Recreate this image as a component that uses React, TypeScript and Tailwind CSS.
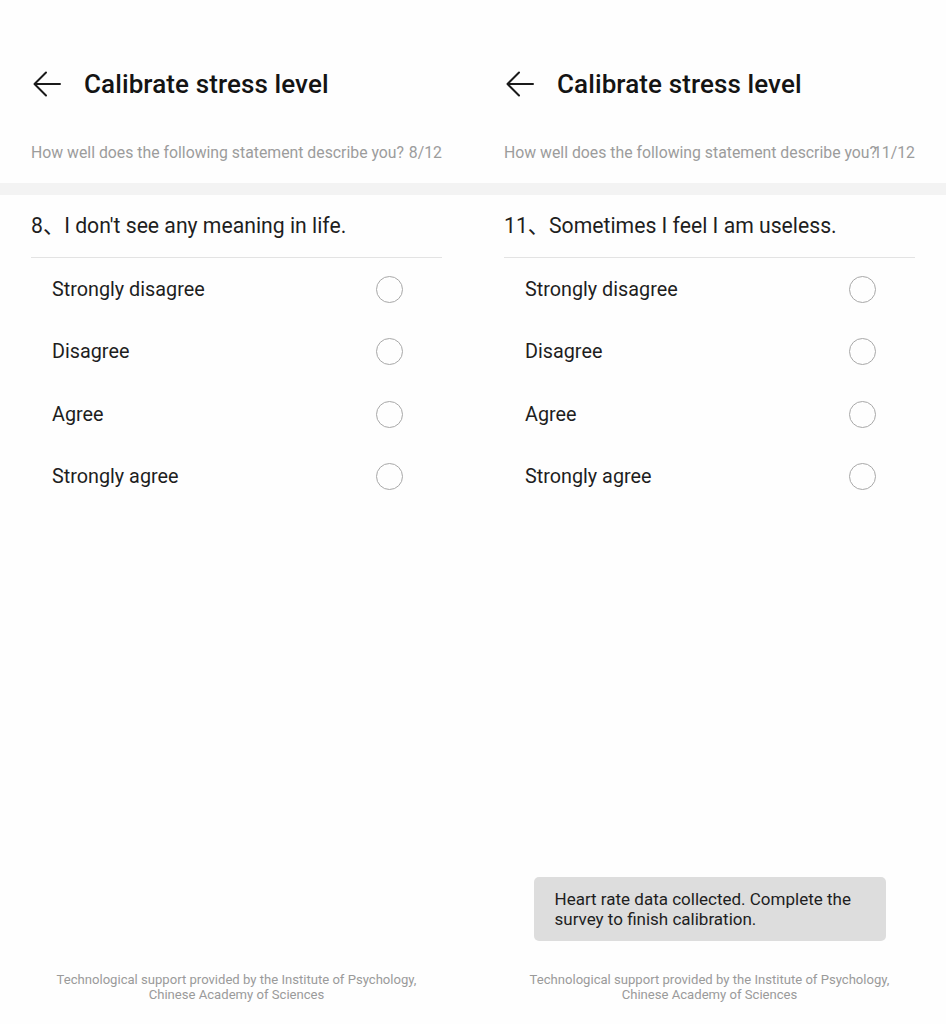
import React from "react"

type Panel = {
  number: number
  question: string
  toast?: string
}

const options = ["Strongly disagree", "Disagree", "Agree", "Strongly agree"]

const panels: Panel[] = [
  { number: 8, question: "I don't see any meaning in life." },
  {
    number: 11,
    question: "Sometimes I feel I am useless.",
    toast: "Heart rate data collected. Complete the survey to finish calibration.",
  },
]

function BackArrow() {
  return (
    <svg width="30" height="28" viewBox="0 0 30 28" fill="none">
      <path
        d="M28 14H3M14 2.5L2.5 14L14 25.5"
        stroke="#1a1a1a"
        strokeWidth="2"
        strokeLinecap="round"
        strokeLinejoin="round"
      />
    </svg>
  )
}

function SurveyScreen({ number, question, toast }: Panel) {
  return (
    <section className="flex h-[1024px] w-[473px] flex-col bg-[#fefefe]">
      <header className="mt-[56px] flex h-[56px] items-center pl-[32px]">
        <BackArrow />
        <h1 className="ml-[22px] text-[26px] font-medium tracking-[0.1px] text-[#141414]">
          Calibrate stress level
        </h1>
      </header>

      {/* the counter sits flush against the prompt and overlaps it for two-digit numbers */}
      <div className="mx-[31px] mt-[27px] flex h-[28px] items-center text-[15.8px] text-[#9c9c9c]">
        <span className="min-w-0 flex-1 whitespace-nowrap">
          How well does the following statement describe you?
        </span>
        <span className="shrink-0">{number}/12</span>
      </div>

      <div className="mt-[16px] h-[12px] bg-[#f3f3f3]" />

      <div className="mx-[31px]">
        <p className="flex h-[62px] items-center text-[21.2px] text-[#1e1e1e]">
          {number}、{question}
        </p>
        <div className="h-px bg-[#e3e3e3]" />
        <ul>
          {options.map((option) => (
            <li
              key={option}
              className="flex h-[62.5px] items-center justify-between pl-[21px] pr-[39px] text-[19.8px] text-[#1e1e1e]"
            >
              <span className="pt-px">{option}</span>
              <span className="h-[27px] w-[27px] rounded-full border-[1.5px] border-[#a8a8a8]" />
            </li>
          ))}
        </ul>
      </div>

      <div className="mt-auto flex flex-col items-center pb-[22px]">
        {toast ? (
          <div className="mb-[31px] w-[352px] rounded-[5px] bg-[#dddddd] px-[21px] py-[12px] text-[17px] leading-[20px] text-[#1e1e1e]">
            {toast}
          </div>
        ) : null}
        <p className="text-center text-[13.1px] leading-[15px] text-[#9a9a9a]">
          Technological support provided by the Institute of Psychology,
          <br />
          Chinese Academy of Sciences
        </p>
      </div>
    </section>
  )
}

export default function App() {
  return (
    <main
      className="flex w-[946px] bg-white"
      style={{ fontFamily: 'Roboto, "Noto Sans CJK SC", sans-serif' }}
    >
      {panels.map((panel) => (
        <SurveyScreen key={panel.number} {...panel} />
      ))}
    </main>
  )
}
